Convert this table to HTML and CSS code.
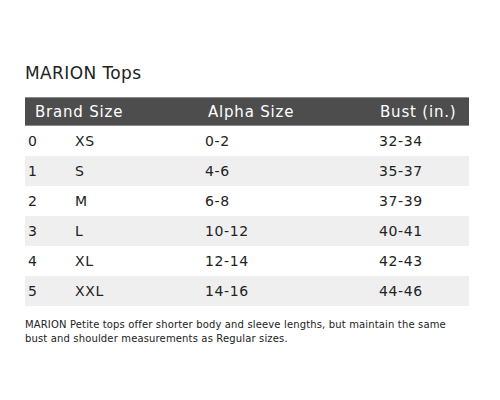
FILE: index.html
```html
<!DOCTYPE html>
<html>
<head>
<meta charset="utf-8">
<link rel="stylesheet" href="styles.css">
</head>
<body>
<main class="page">
  <h1 class="title">MARION Tops</h1>
  <div class="table">
    <div class="head">
      <span class="h-brand">Brand Size</span>
      <span class="h-alpha">Alpha Size</span>
      <span class="h-bust">Bust (in.)</span>
    </div>
    <div class="row"><span>0</span><span>XS</span><span>0-2</span><span>32-34</span></div>
    <div class="row alt"><span>1</span><span>S</span><span>4-6</span><span>35-37</span></div>
    <div class="row"><span>2</span><span>M</span><span>6-8</span><span>37-39</span></div>
    <div class="row alt"><span>3</span><span>L</span><span>10-12</span><span>40-41</span></div>
    <div class="row"><span>4</span><span>XL</span><span>12-14</span><span>42-43</span></div>
    <div class="row alt"><span>5</span><span>XXL</span><span>14-16</span><span>44-46</span></div>
  </div>
  <p class="note">MARION Petite tops offer shorter body and sleeve lengths, but maintain the same bust and shoulder measurements as Regular sizes.</p>
</main>
</body>
</html>
```
FILE: styles.css
```css
* { box-sizing: border-box; }
html, body { margin: 0; padding: 0; background: #fff; }
body {
  font-family: "DejaVu Sans", sans-serif;
  color: #222;
}
.page {
  width: 500px;
  height: 400px;
  padding: 63px 31px 0 25px;
}
.title {
  margin: 0 0 14px 0;
  font-size: 17px;
  letter-spacing: 0.4px;
  font-weight: normal;
  line-height: 20px;
  color: #222;
}
.table {
  width: 444px;
}
.head {
  display: grid;
  grid-template-columns: 173px 172px 1fr;
  height: 29px;
  align-items: center;
  background: #4d4d4d;
  color: #fff;
  font-size: 15px;
  letter-spacing: 0.8px;
  padding-left: 10px;
  border-top: 1px solid #8a8a8a;
  border-bottom: 1px solid #8a8a8a;
}
.row {
  display: grid;
  grid-template-columns: 47px 130px 174px 1fr;
  height: 30px;
  align-items: center;
  padding-left: 3px;
  font-size: 14px;
  letter-spacing: 0.6px;
}
.row.alt { background: #efefef; }
.note {
  width: 432px;
  margin: 12px 0 0 0;
  font-size: 10px;
  letter-spacing: 0.15px;
  line-height: 14px;
  color: #222;
}
```
